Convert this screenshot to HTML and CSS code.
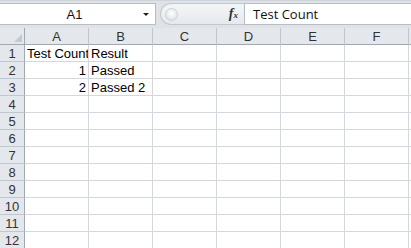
FILE: index.html
```html
<!DOCTYPE html>
<html lang="en">

<head>
  <meta charset="UTF-8" />
  <title>Sheet1</title>
  <link rel="stylesheet" href="styles.css">
</head>

<body>
  <div class="formula-bar">
    <div class="name-box">
      <span class="name-text">A1</span>
      <span class="name-arrow"></span>
    </div>
    <div class="fx-area">
      <div class="fx-pill">
        <span class="fx-knob"></span>
        <span class="fx-label">f<sub>x</sub></span>
      </div>
    </div>
    <div class="formula-input">Test Count</div>
  </div>

  <div class="sheet">
    <div class="corner"><span class="corner-tri"></span></div>
    <div class="col-head">A</div>
    <div class="col-head">B</div>
    <div class="col-head">C</div>
    <div class="col-head">D</div>
    <div class="col-head">E</div>
    <div class="col-head">F</div>
    <div class="col-head"></div>
  </div>

  <script>
    // fill the grid rows
    const sheet = document.querySelector(".sheet");
    const data = {
      1: ["Test Count", "Result"],
      2: [1, "Passed"],
      3: [2, "Passed 2"]
    };

    for (let r = 1; r <= 12; r++) {
      const head = document.createElement("div");
      head.className = "row-head";
      head.textContent = r;
      sheet.appendChild(head);

      for (let c = 0; c < 7; c++) {
        const cell = document.createElement("div");
        cell.className = "cell";
        const row = data[r];
        if (row && row[c] !== undefined) {
          cell.textContent = row[c];
          if (typeof row[c] === "number") cell.classList.add("num");
        }
        sheet.appendChild(cell);
      }
    }
  </script>
</body>

</html>
```

FILE: styles.css
```css
body {
  margin: 0;
  width: 411px;
  height: 248px;
  overflow: hidden;
  background: #fff;
  font-family: "Liberation Sans", Arial, sans-serif;
}

.formula-bar {
  display: flex;
  height: 28px;
  box-sizing: border-box;
  padding: 2px 0 3px 0;
  background: #dfe3e8;
  border-top: 1px solid #cfd4da;
}

.name-box {
  width: 156px;
  display: flex;
  align-items: center;
  background: #fff;
  border: 1px solid #b7bdc5;
  border-left: none;
  box-sizing: border-box;
}

.name-text {
  flex: 1;
  text-align: center;
  font-size: 13px;
  color: #111;
  padding-left: 6px;
}

.name-arrow {
  width: 0;
  height: 0;
  border-left: 3px solid transparent;
  border-right: 3px solid transparent;
  border-top: 3px solid #222;
  margin: 1px 6px 0 0;
}

.fx-area {
  width: 88px;
  display: flex;
  padding-left: 4px;
  box-sizing: border-box;
}

.fx-pill {
  flex: 1;
  display: flex;
  align-items: center;
  justify-content: space-between;
  background: linear-gradient(#f4f5f7, #e6e9ed);
  border: 1px solid #c3c8cf;
  border-right: none;
  border-radius: 11px 0 0 11px;
  padding: 0 6px 0 4px;
}

.fx-knob {
  width: 11px;
  height: 11px;
  border-radius: 50%;
  background: radial-gradient(circle at 50% 40%, #fff, #d6dade);
  border: 1px solid #cdd2d8;
}

.fx-label {
  font-family: "Liberation Serif", "Times New Roman", serif;
  font-style: italic;
  font-weight: bold;
  font-size: 14px;
  color: #333;
}

.fx-label sub {
  font-size: 9px;
  vertical-align: baseline;
}

.formula-input {
  flex: 1;
  background: #fff;
  border: 1px solid #b7bdc5;
  border-right: none;
  font-family: "Open Sans", sans-serif;
  font-size: 13px;
  line-height: 20px;
  padding-left: 8px;
  color: #111;
}

.sheet {
  display: grid;
  grid-template-columns: 25px repeat(6, 64px) 20px;
  grid-auto-rows: 17px;
}

.corner,
.col-head,
.row-head {
  background: #e4e8ed;
  color: #333;
  font-size: 13px;
  line-height: 16px;
  padding-top: 1px;
  overflow: hidden;
  box-sizing: border-box;
}

.corner {
  position: relative;
  border-right: 1px solid #9fa8b3;
  border-bottom: 1px solid #9fa8b3;
}

.corner-tri {
  position: absolute;
  right: 2px;
  bottom: 2px;
  width: 0;
  height: 0;
  border-left: 8px solid transparent;
  border-bottom: 8px solid #c4c9cf;
}

.col-head {
  text-align: center;
  border-right: 1px solid #c0c6cd;
  border-bottom: 1px solid #9fa8b3;
}

.row-head {
  text-align: center;
  border-right: 1px solid #9fa8b3;
  border-bottom: 1px solid #c0c6cd;
}

.cell {
  font-size: 13px;
  line-height: 16px;
  padding: 1px 2px 0 2px;
  color: #000;
  white-space: nowrap;
  overflow: hidden;
  box-sizing: border-box;
  border-right: 1px solid #d4d8de;
  border-bottom: 1px solid #d4d8de;
}

.cell.num {
  text-align: right;
}
```
